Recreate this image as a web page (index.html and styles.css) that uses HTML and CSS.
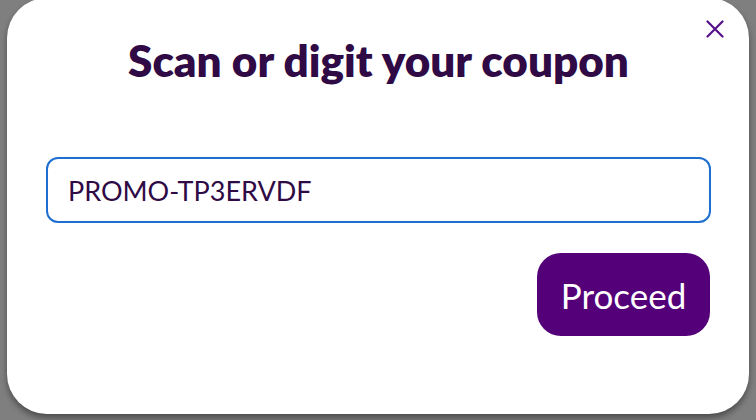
FILE: index.html
```html
<!DOCTYPE html>
<html lang="en">
<head>
<meta charset="utf-8">
<title>Coupon</title>
<link rel="stylesheet" href="styles.css">
</head>
<body>
<div class="dialog">
  <button class="close" aria-label="Close">
    <svg width="18" height="18" viewBox="0 0 18 18"><path d="M1.5 1.5 L16.5 16.5 M16.5 1.5 L1.5 16.5" stroke="#56108a" stroke-width="2.2" stroke-linecap="round" fill="none"/></svg>
  </button>
  <h1 class="title">Scan or digit your coupon</h1>
  <div class="field">PROMO-TP3ERVDF</div>
  <div class="actions">
    <button class="proceed">Proceed</button>
  </div>
</div>
</body>
</html>
```
FILE: styles.css
```css
html, body {
  margin: 0;
  height: 100%;
}
body {
  background: #7f7f7f;
  overflow: hidden;
  font-family: Lato, "Noto Sans", sans-serif;
}
.dialog {
  position: relative;
  box-sizing: border-box;
  margin: -2px 7px 0 7px;
  height: 416px;
  background: #fff;
  border-radius: 40px;
  box-shadow: 0 4px 6px rgba(0,0,0,0.4);
  padding: 36px 38px 0 39px;
}
.close {
  position: absolute;
  top: 22px;
  right: 25px;
  width: 18px;
  height: 18px;
  padding: 0;
  border: 0;
  background: none;
  display: flex;
}
.title {
  margin: 0;
  text-align: center;
  font-size: 44px;
  font-weight: 800;
  line-height: 52px;
  color: #2f0a45;
}
.field {
  margin-top: 71px;
  height: 66px;
  box-sizing: border-box;
  border: 2px solid #1f6fd1;
  border-radius: 12px;
  padding: 0 20px;
  display: flex;
  align-items: center;
  font-size: 27px;
  color: #2f0a45;
}
.actions {
  display: flex;
  justify-content: flex-end;
  margin-top: 30px;
  padding-right: 1px;
}
.proceed {
  width: 173px;
  height: 83px;
  border: 0;
  border-radius: 24px;
  background: #530079;
  color: #fff;
  font-family: Lato, "Noto Sans", sans-serif;
  font-size: 35px;
  padding: 0;
}
```
